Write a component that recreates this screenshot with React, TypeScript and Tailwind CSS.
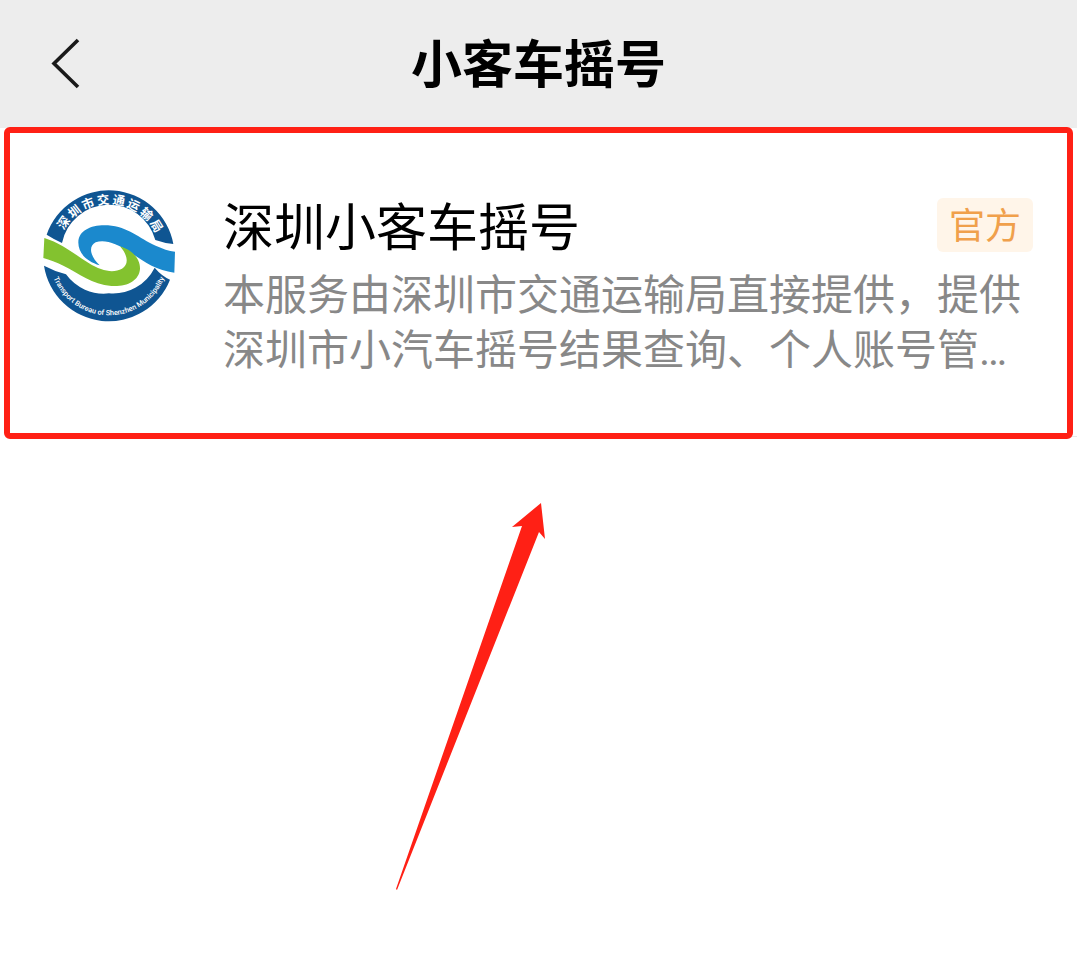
const bureauName = '深圳市交通运输局'

function BureauLogo() {
  return (
    <svg viewBox="27 31 396 396" className="size-[132px] shrink-0" role="img" aria-label="深圳市交通运输局">
      <path
        fill="#0f5592"
        d="M38 165A197 197 0 0 1 418 193Q392 191 364 181A144 144 0 0 0 84 190Q60 179 38 165Z"
      />
      <path
        fill="#0f5592"
        d="M30 258Q60 274 96 284A140 140 0 0 0 225 341A140 140 0 0 0 362 264Q382 288 408 300A197 197 0 0 1 30 258Z"
      />
      <path
        fill="#1b89cd"
        d="M197 257C160 246 132 222 133 187C135 150 175 134 222 137C283 142 315 176 365 198C385 207 405 214 423 216L421 279C365 272 325 243 286 216C250 192 212 178 185 188C161 200 170 232 197 257Z"
      />
      <path
        fill="#83c22f"
        d="M258 200C292 210 319 235 318 268C315 304 278 322 232 319C174 313 136 282 88 258C67 248 47 241 28 235L31 175C85 192 125 226 164 250C204 275 238 281 264 267C286 254 281 226 258 200Z"
      />
      <g fill="#fff" fontSize="37" fontWeight="700" textAnchor="middle">
        {[...bureauName].map((char, i) => (
          <text key={i} x="225" y="73" transform={`rotate(${-54 + i * 16} 225 228)`}>
            {char}
          </text>
        ))}
      </g>
      <path id="logo-arc" fill="none" d="M46 228A179 179 0 0 0 404 228" />
      <text fill="#fff" fontSize="22" fontWeight="500" textAnchor="middle">
        <textPath href="#logo-arc" startOffset="50%">
          Transport Bureau of Shenzhen Municipality
        </textPath>
      </text>
    </svg>
  )
}

export default function App() {
  return (
    <div
      lang="zh-CN"
      className="min-h-screen bg-white font-['Roboto','Noto_Sans_CJK_SC',sans-serif] text-black"
    >
      <header className="grid h-32 grid-cols-[1fr_auto_1fr] items-center bg-[#ededed] px-12">
        <button type="button" aria-label="返回" className="justify-self-start">
          <svg viewBox="0 0 34 52" className="h-[52px] w-[34px]" fill="none" stroke="#1a1a1a" strokeWidth="3.6">
            <path d="M30 2 6 25.500 30 49" />
          </svg>
        </button>
        <h1 className="pt-1 text-[51px] leading-[60px] font-bold">小客车摇号</h1>
      </header>

      <main>
        <div className="relative">
          <a href="#" className="flex gap-12 pt-[62px] pr-11 pb-[58px] pl-[43px]">
            <BureauLogo />
            <div className="min-w-0 flex-1">
              <div className="flex items-start justify-between">
                <h2 className="text-[51px] leading-[78px]">深圳小客车摇号</h2>
                <span className="mt-2 rounded-md bg-[#fff5e9] px-3 pt-1 text-[36px] leading-[50px] text-[#f0a04b]">
                  官方
                </span>
              </div>
              <p className="text-[42px] leading-[55px] text-[#888]">
                本服务由深圳市交通运输局直接提供，提供深圳市小汽车摇号结果查询、个人账号管…
              </p>
            </div>
          </a>
          <div className="ml-[223px] h-px bg-[#e8e8e8]" />
          <div className="pointer-events-none absolute inset-x-1 -top-px -bottom-0.5 rounded-md border-6 border-[#ff2015]" />
        </div>

        <svg viewBox="0 0 150 388" className="mt-[66px] ml-[396px] h-[388px] w-[150px]" fill="#ff2015">
          <path d="M145 0 149 36 143 29 1 387 0 386 126 23 116 24Z" />
        </svg>
      </main>
    </div>
  )
}
